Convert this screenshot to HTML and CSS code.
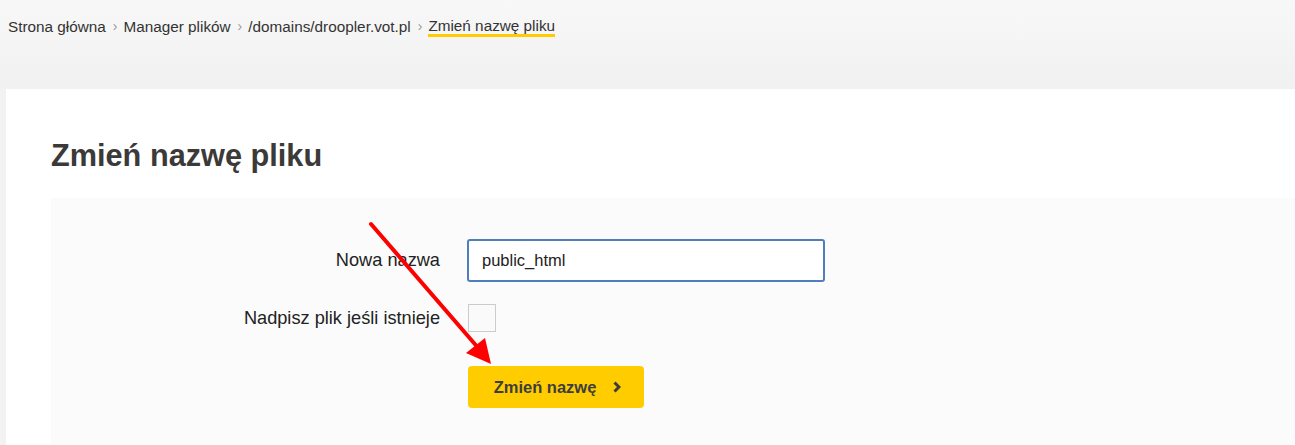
FILE: index.html
```html
<!DOCTYPE html>
<html lang="pl">
    <head>
        <meta charset="utf-8" />
        <title>Zmień nazwę pliku</title>
        <link rel="stylesheet" href="styles.css">
    </head>
    <body>
        <div class="top">
            <nav class="breadcrumb">
                <a href="#">Strona główna</a>
                <span class="sep">›</span>
                <a href="#">Manager plików</a>
                <span class="sep">›</span>
                <a href="#">/domains/droopler.vot.pl</a>
                <span class="sep">›</span>
                <span class="current">Zmień nazwę pliku</span>
            </nav>
        </div>

        <div class="card">
            <h1>Zmień nazwę pliku</h1>

            <form class="panel">
                <label class="label" for="name">Nowa nazwa</label>
                <input class="text" type="text" id="name" value="public_html">

                <label class="label" for="overwrite">Nadpisz plik jeśli istnieje</label>
                <span class="check" id="overwrite"></span>

                <span></span>
                <button type="button" class="btn">
                    Zmień nazwę
                    <svg width="8" height="12" viewBox="0 0 8 12"><polyline points="1.5,1.5 6,6 1.5,10.5" fill="none" stroke="#3d3d3d" stroke-width="3"/></svg>
                </button>
            </form>
        </div>

        <!-- annotation arrow drawn on top of the screenshot -->
        <svg class="arrow" width="1295" height="445" viewBox="0 0 1295 445">
            <line x1="371" y1="224" x2="480" y2="350" stroke="#ff0000" stroke-width="4" stroke-linecap="round"/>
            <polygon points="466,353 485,338 491,364" fill="#ff0000"/>
        </svg>
    </body>
</html>
```

FILE: styles.css
```css
body {
    margin: 0;
    background: #f2f2f2;
    font-family: "Liberation Sans", Arial, sans-serif;
    color: #333;
    height: 445px;
    overflow: hidden;
    position: relative;
}
.top {
    height: 89px;
    background: linear-gradient(#f8f8f8, #f1f1f1);
    box-sizing: border-box;
    padding: 18px 0 0 8px;
}
.breadcrumb {
    display: flex;
    align-items: flex-start;
    font-size: 15.3px;
    line-height: 17px;
}
.breadcrumb a {
    color: #333;
    text-decoration: none;
}
.sep {
    color: #999;
    font-size: 14px;
    padding: 0 6px 0 7px;
}
.current {
    border-bottom: 3px solid #ffcc00;
    line-height: 16px;
}
.card {
    margin-left: 6px;
    background: #fff;
    padding: 49px 0 1px 45px;
}
h1 {
    margin: 0 0 24px 0;
    font-size: 30.7px;
    line-height: 36px;
    color: #3b3a38;
}
.panel {
    background: #fbfbfb;
    display: grid;
    grid-template-columns: 389px 358px;
    column-gap: 27px;
    row-gap: 22px;
    align-items: center;
    align-content: start;
    padding: 41px 0 0 0;
    height: 246px;
    box-sizing: border-box;
}
.label {
    text-align: right;
    font-size: 18.2px;
    color: #222;
}
.text {
    height: 43px;
    box-sizing: border-box;
    border: 2px solid #4f7fbb;
    border-radius: 3px;
    padding: 0 13px;
    font-family: inherit;
    font-size: 16.5px;
    color: #222;
    background: #fff;
    outline: none;
}
.check {
    display: block;
    width: 28px;
    height: 28px;
    box-sizing: border-box;
    border: 1px solid #ccc;
    background: #fafafa;
    margin-left: 1px;
}
.btn {
    justify-self: start;
    margin: 12px 0 0 1px;
    width: 176px;
    height: 42px;
    background: #ffcc00;
    border: none;
    border-radius: 4px;
    font-family: inherit;
    font-weight: bold;
    font-size: 16.5px;
    color: #3d3d3d;
    display: flex;
    align-items: center;
    justify-content: center;
    gap: 17px;
    padding: 0 0 0 3px;
}
.arrow {
    position: absolute;
    left: 0;
    top: 0;
    pointer-events: none;
}
```
